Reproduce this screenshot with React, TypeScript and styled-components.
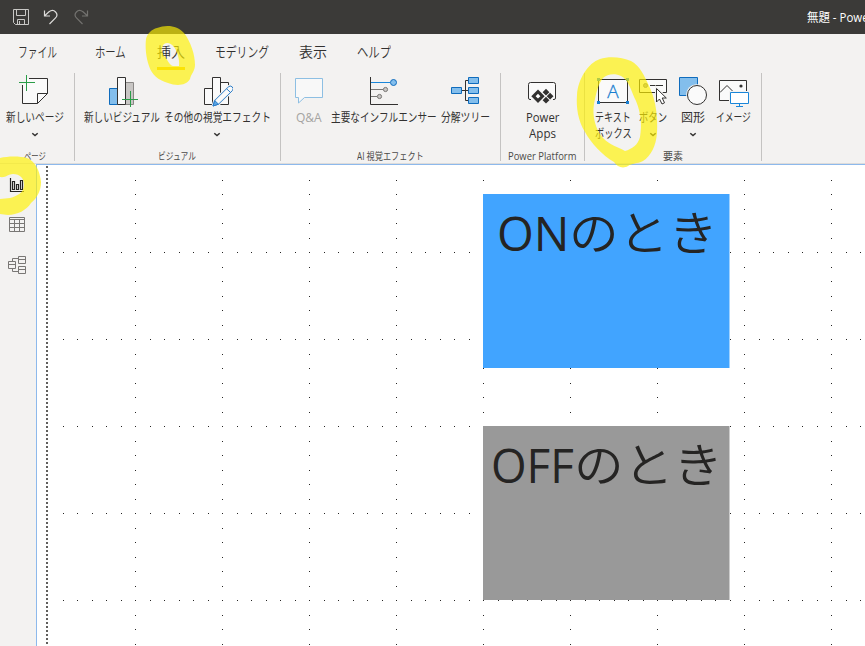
import React, { useLayoutEffect, useRef, useState } from "react";
import styled, { createGlobalStyle } from "styled-components";

const UI = `"Open Sans", "Noto Sans CJK JP", sans-serif`;
const INK = "#323130";
const ACCENT = "#0f6cbd";
const SKY = "#83beec";

const GlobalStyle = createGlobalStyle`
  * { box-sizing: border-box; }
  body { margin: 0; background: #fff; font-family: ${UI}; color: ${INK}; }
`;

const Window = styled.div`
  position: relative;
  display: flex;
  flex-direction: column;
  width: 865px;
  height: 646px;
  overflow: hidden;
`;

const TitleBar = styled.header`
  display: flex;
  align-items: center;
  height: 34px;
  padding-left: 13px;
  gap: 14px;
  background: #3b3a38;
  svg { flex: none; }
`;

const WindowTitle = styled.div`
  margin-left: 704px;
  padding-top: 1px;
  font-size: 12px;
  line-height: 33px;
  color: #fff;
  white-space: nowrap;
`;

const Tabs = styled.nav`
  display: flex;
  height: 39px;
  background: #f3f2f1;
`;

const Tab = styled.div<{ $gap: number }>`
  position: relative;
  height: 36px;
  margin-left: ${(p) => p.$gap}px;
  font-size: 14px;
  font-family: "Noto Sans CJK JP", sans-serif;
  font-weight: 350;
  line-height: 35px;
`;

const ActiveMark = styled.div`
  position: absolute;
  left: 0;
  right: 0;
  bottom: 0;
  height: 3px;
  background: #f2c811;
`;

const Ribbon = styled.section`
  display: flex;
  height: 91px;
  background: #f3f2f1;
  border-bottom: 1px solid #dddcdb;
`;

const Group = styled.div<{ $width: number; $pad?: number }>`
  display: flex;
  flex-direction: column;
  flex: none;
  width: ${(p) => p.$width}px;
  height: 88px;
  padding-left: ${(p) => p.$pad ?? 0}px;
  border-right: 1px solid #c4c3c2;
`;

const Commands = styled.div`
  display: flex;
  flex: none;
  height: 74px;
  padding-top: 2px;
`;

const GroupLabel = styled.div<{ $indent: number }>`
  display: flex;
  padding-left: ${(p) => p.$indent}px;
  font-size: 10px;
  line-height: 18px;
  color: #4b4a48;
`;

const Command = styled.div<{ $width: number; $gap?: number; $disabled?: boolean }>`
  display: flex;
  flex: none;
  flex-direction: column;
  align-items: center;
  width: ${(p) => p.$width}px;
  margin-left: ${(p) => p.$gap ?? 0}px;
  font-size: 12px;
  line-height: 16px;
  color: ${(p) => (p.$disabled ? "#a5a4a2" : INK)};
  svg { flex: none; }
`;

const LabelLines = styled.div`
  display: flex;
  flex-direction: column;
  align-items: center;
  margin-top: 3px;
`;

const FitBox = styled.span`
  display: block;
  white-space: nowrap;
`;

const FitText = styled.span`
  display: inline-block;
  transform-origin: 0 50%;
`;

const Body = styled.main`
  display: flex;
  flex: 1;
  min-height: 0;
`;

const Rail = styled.aside`
  display: flex;
  flex: none;
  flex-direction: column;
  gap: 16px;
  width: 36px;
  padding: 9px 0 0 5px;
  background: #f3f2f1;
  svg { flex: none; }
`;

const Canvas = styled.div`
  position: relative;
  flex: 1;
  overflow: hidden;
  background: #fff;
  border-top: 1px solid #8db9ec;
  border-left: 1px solid #8db9ec;
`;

const GridDots = styled.svg`
  position: absolute;
  left: 0;
  top: 0;
`;

const Tile = styled.div<{ $top: number; $color: string; $indent: number }>`
  position: absolute;
  display: flex;
  left: 446px;
  top: ${(p) => p.$top}px;
  width: 247px;
  height: 174px;
  padding: 5px 0 0 ${(p) => p.$indent}px;
  background: ${(p) => p.$color};
  border-right: 1px solid rgba(255, 255, 255, 0.5);
  font-size: 48px;
  line-height: 68px;
  color: #252423;
`;

const Kana = styled.span`
  display: block;
  font-family: "Noto Sans CJK JP", sans-serif;
  font-size: 47px;
  line-height: 62px;
  font-weight: 350;
`;

const Marker = styled.svg`
  position: absolute;
  left: 0;
  top: 0;
  pointer-events: none;
`;

/* Squeezes a single line of text into a known width. */
function Fit({ w, children }: { w: number; children: React.ReactNode }) {
  const ref = useRef<HTMLSpanElement>(null);
  const [scale, setScale] = useState(1);
  useLayoutEffect(() => {
    const natural = ref.current?.offsetWidth;
    if (natural) setScale(w / natural);
  }, [w]);
  return (
    <FitBox style={{ width: w }}>
      <FitText ref={ref} style={{ transform: `scaleX(${scale})` }}>{children}</FitText>
    </FitBox>
  );
}

function Icon({ x, children }: { x: number; children: React.ReactNode }) {
  return (
    <svg width="32" height="32" viewBox={`${x} 75 32 32`} fill="none" stroke={INK}>
      {children}
    </svg>
  );
}

const Chevron = () => (
  <svg width="8" height="16" viewBox="0 0 8 16" fill="none" stroke={INK} strokeWidth="1.5">
    <path d="M1.3 7.2 4 9.5 6.7 7.2" />
  </svg>
);

type CmdProps = {
  width: number;
  gap?: number;
  disabled?: boolean;
  icon: React.ReactNode;
  lines: [string, number][];
  menu?: boolean;
};

function Cmd({ width, gap, disabled, icon, lines, menu }: CmdProps) {
  return (
    <Command $width={width} $gap={gap} $disabled={disabled}>
      {icon}
      <LabelLines>
        {lines.map(([text, w]) => (
          <Fit key={text} w={w}>{text}</Fit>
        ))}
        {menu && <Chevron />}
      </LabelLines>
    </Command>
  );
}

const NewPageIcon = () => (
  <Icon x={19}>
    <path d="M22.5 84V103.5H37.5L47.5 93.5V78.5H27V84Z" fill="#fafafa" stroke="none" />
    <path d="M29 78.5H47.5V93.5L37.5 103.5H22.5V85" />
    <path d="M37.5 103.5V93.5H47.5" />
    <path d="M26.5 75V91M19 82.5H35" stroke="#2a9d48" />
  </Icon>
);
const NewVisualIcon = () => (
  <Icon x={106}>
    <path d="M109.5 88.5H117.5V104.5H109.5Z" fill={SKY} stroke={ACCENT} />
    <path d="M125.5 82.5H133.5V104.5H125.5Z" fill="#c8c6c4" stroke="#8a8886" />
    <path d="M117.5 77.5H125.5V104.5H117.5Z" fill="#fafafa" />
    <path d="M130.5 91V107M122 99.5H138" stroke="#2a9d48" />
  </Icon>
);
const MoreVisualsIcon = () => (
  <Icon x={201}>
    <path d="M204.5 88.5H212.5V104.5H204.5ZM212.5 77.5H220.5V104.5H212.5ZM220.5 82.5H228.5V104.5H220.5Z" fill="#fafafa" />
    <path d="M213 106 214.7 100.5 228.3 87A2.7 2.7 0 0 1 232.3 90.7L218.5 104.2Z" fill="#fafafa" stroke="#f3f2f1" strokeWidth="3" />
    <path d="M213 106 214.7 100.5 228.3 87A2.7 2.7 0 0 1 232.3 90.7L218.5 104.2Z" fill="#fafafa" stroke="#2b7cc7" />
    <path d="M213 106 214.7 100.5 218.5 104.2Z" fill="#5aa5e4" stroke="#2b7cc7" />
    <path d="M226.5 88.7 230.5 92.4" stroke="#2b7cc7" />
  </Icon>
);
const QnaIcon = () => (
  <Icon x={293}>
    <path d="M295.5 78.5H322.5V97.5H304.5L298.5 103V97.5H295.5Z" fill="#f8f8f8" stroke="#8dbfe3" />
  </Icon>
);
const InfluencerIcon = () => (
  <Icon x={368}>
    <path d="M371 89.5H383M371 96.5H377" stroke="#797775" />
    <path d="M371 82.5H390" stroke="#1a86d9" />
    <path d="M370.5 77V104.5H398" />
    <circle cx="393.5" cy="82.5" r="3" fill={SKY} stroke={ACCENT} />
    <circle cx="385.5" cy="89.5" r="2.1" fill="#c8c6c4" stroke="#797775" />
    <circle cx="379.5" cy="96.5" r="2.1" fill="#c8c6c4" stroke="#797775" />
  </Icon>
);
const TreeIcon = () => (
  <Icon x={449}>
    <path d="M461 90.5H468M468 80.5H465.5V100.5H468" />
    <path d="M451.5 87.5H461.5V93.5H451.5ZM468.5 77.5H478.5V83.5H468.5ZM468.5 87.5H478.5V93.5H468.5ZM468.5 97.5H478.5V103.5H468.5Z" fill={SKY} stroke={ACCENT} />
  </Icon>
);
const PowerAppsIcon = () => (
  <Icon x={526}>
    <path d="M531 99.5H530Q528.5 99.5 528.5 98V84.5Q528.5 82.5 530.5 82.5H553.5Q555.5 82.5 555.5 84.5V98Q555.5 99.5 554 99.5H553" fill="#fafafa" />
    <path d="M538 89.5 544.7 96.2 538 102.9 531.3 96.2ZM546 88.8 549.4 92.2 546 95.6 542.6 92.2ZM550.1 92.8 553.5 96.2 550.1 99.6 546.7 96.2ZM546 96.8 549.4 100.2 546 103.6 542.6 100.2Z" fill={INK} stroke="none" />
    <path d="M538 93.8 540.4 96.2 538 98.6 535.6 96.2Z" fill="#fff" stroke="none" />
  </Icon>
);
const TextBoxIcon = () => (
  <Icon x={597}>
    <path d="M598.5 79.5H627.5V102.5H598.5Z" fill="#fafafa" />
    <path d="M597 78H600V81H597ZM626 78H629V81H626ZM597 101H600V104H597ZM626 101H629V104H626Z" fill="#1a7fd0" stroke="none" />
    <text x="613" y="98" fontSize="19" textAnchor="middle" fontFamily="Open Sans" fontWeight="300" fill="#1a7fd0" stroke="#1a7fd0" strokeWidth="0.3">A</text>
  </Icon>
);
const ButtonIcon = () => (
  <Icon x={637}>
    <path d="M639.5 79.5H666.5V92.5H639.5Z" fill="#fafafa" />
    <circle cx="645.5" cy="85.5" r="2" fill="#a6a5a2" stroke="#797775" />
    <path d="M650 85.5H663" />
    <path d="M656.5 88.5V102L659.5 99 662 104 664.5 102.8 662.2 98H666.3Z" fill="#fff" stroke="#f3f2f1" strokeWidth="3" />
    <path d="M656.5 88.5V102L659.5 99 662 104 664.5 102.8 662.2 98H666.3Z" fill="#fff" />
  </Icon>
);
const ShapesIcon = () => (
  <Icon x={677}>
    <path d="M679.5 77.5H697.5V95.5H679.5Z" fill={SKY} stroke={ACCENT} />
    <circle cx="697" cy="95" r="10.8" fill="#f3f2f1" stroke="none" />
    <circle cx="697" cy="95" r="9.5" fill="#fafafa" />
  </Icon>
);
const ImageIcon = () => (
  <Icon x={717}>
    <path d="M719.5 80.5H746.5V100.5H719.5Z" fill="#fafafa" />
    <path d="M720 92.5 727 85.5 733 91.5" />
    <circle cx="741" cy="86" r="1.6" fill={INK} stroke="none" />
    <path d="M730.5 92.5H748.5V103.5H730.5Z" fill="#fff" stroke="#f3f2f1" strokeWidth="3" />
    <path d="M730.5 92.5H748.5V103.5H730.5ZM739.5 104V106.5M736 106.5H743" fill="#fff" stroke="#1a86d9" />
  </Icon>
);

const HIGHLIGHT = "rgba(255, 241, 0, 0.66)";

export default function App() {
  return (
    <Window>
      <GlobalStyle />
      <TitleBar>
        <svg width="16" height="16" viewBox="0 0 16 16" fill="none" stroke="#c9c8c6">
          <path d="M.5 .5H15.5V15.5H2.5L.5 13.5ZM3.5 .5V6.5H12.5V.5M4.5 15.5V10.5H11.5V15.5M6.5 12V15" />
        </svg>
        <svg width="16" height="16" viewBox="0 0 16 16" fill="none" stroke="#dddcda" strokeWidth="1.2">
          <path d="M1.5 1.5V7H7M1.7 6.8 6 2.8C8.5 .8 11 1.2 12.6 3 14.5 5 14.1 7.4 12.3 9.2L6.5 15" />
        </svg>
        <svg width="16" height="16" viewBox="0 0 16 16" fill="none" stroke="#73726f" strokeWidth="1.2">
          <path d="M14.5 1.5V7H9M14.3 6.8 10 2.8C7.5 .8 5 1.2 3.4 3 1.5 5 1.9 7.4 3.7 9.2L9.5 15" />
        </svg>
        <WindowTitle><Fit w={62}>無題 - Powe</Fit></WindowTitle>
      </TitleBar>

      <Tabs>
        <Tab $gap={18}><Fit w={39}>ファイル</Fit></Tab>
        <Tab $gap={38}><Fit w={31}>ホーム</Fit></Tab>
        <Tab $gap={31}><Fit w={28}>挿入</Fit><ActiveMark /></Tab>
        <Tab $gap={30}><Fit w={54}>モデリング</Fit></Tab>
        <Tab $gap={30}><Fit w={28}>表示</Fit></Tab>
        <Tab $gap={30}><Fit w={34}>ヘルプ</Fit></Tab>
      </Tabs>

      <Ribbon>
        <Group $width={75}>
          <Commands>
            <Cmd width={70} icon={<NewPageIcon />} lines={[["新しいページ", 58]]} menu />
          </Commands>
          <GroupLabel $indent={24}><Fit w={22}>ページ</Fit></GroupLabel>
        </Group>
        <Group $width={206} $pad={6}>
          <Commands>
            <Cmd width={82} icon={<NewVisualIcon />} lines={[["新しいビジュアル", 76]]} />
            <Cmd width={108} icon={<MoreVisualsIcon />} lines={[["その他の視覚エフェクト", 107]]} menu />
          </Commands>
          <GroupLabel $indent={77}><Fit w={38}>ビジュアル</Fit></GroupLabel>
        </Group>
        <Group $width={220} $pad={7}>
          <Commands>
            <Cmd width={42} disabled icon={<QnaIcon />} lines={[["Q&A", 26]]} />
            <Cmd width={106} gap={1} icon={<InfluencerIcon />} lines={[["主要なインフルエンサー", 106]]} />
            <Cmd width={50} gap={3} icon={<TreeIcon />} lines={[["分解ツリー", 49]]} />
          </Commands>
          <GroupLabel $indent={69}><Fit w={67}>AI 視覚エフェクト</Fit></GroupLabel>
        </Group>
        <Group $width={84}>
          <Commands>
            <Cmd width={82} icon={<PowerAppsIcon />} lines={[["Power", 33], ["Apps", 27]]} />
          </Commands>
          <GroupLabel $indent={7}><Fit w={68}>Power Platform</Fit></GroupLabel>
        </Group>
        <Group $width={177} $pad={8}>
          <Commands>
            <Cmd width={40} icon={<TextBoxIcon />} lines={[["テキスト", 36], ["ボックス", 37]]} />
            <Cmd width={40} icon={<ButtonIcon />} lines={[["ボタン", 28]]} menu />
            <Cmd width={40} icon={<ShapesIcon />} lines={[["図形", 24]]} menu />
            <Cmd width={40} icon={<ImageIcon />} lines={[["イメージ", 35]]} />
          </Commands>
          <GroupLabel $indent={70}><Fit w={20}>要素</Fit></GroupLabel>
        </Group>
      </Ribbon>

      <Body>
        <Rail>
          <svg width="24" height="24" viewBox="5 173 24 24" fill="none" stroke="#252423">
            <path d="M10.5 178V191.5H24M12.5 181.5H14.5V189.5H12.5ZM16.5 184.5H18.5V189.5H16.5ZM20.5 180.5H22.5V189.5H20.5Z" strokeWidth="1.2" />
          </svg>
          <svg width="24" height="24" viewBox="5 213 24 24" fill="none" stroke="#797775">
            <path d="M9.5 217.5H24.5V231.5H9.5ZM9.5 219.5H24.5M9.5 223.5H24.5M9.5 227.5H24.5M14.5 219.5V231.5M19.5 219.5V231.5" />
          </svg>
          <svg width="24" height="24" viewBox="5 253 24 24" fill="none" stroke="#797775">
            <path d="M8.5 261.5H15.5V268.5H8.5ZM8.5 264.5H15.5M18.5 256.5H25.5V263.5H18.5ZM18.5 259.5H25.5M18.5 266.5H25.5V273.5H18.5ZM18.5 269.5H25.5M12.5 261V258.5H18M12.5 269V271.5H18" />
          </svg>
        </Rail>
        <Canvas>
          <GridDots width="828" height="481" viewBox="37 165 828 481" shapeRendering="crispEdges">
            <defs>
              <pattern id="cols" x="135" y="180" width="87" height="29" patternUnits="userSpaceOnUse">
                <path d="M0 0H1V1H0ZM0 14H1V15H0Z" fill="#252423" />
              </pattern>
              <pattern id="rows" x="63" y="252" width="29" height="87" patternUnits="userSpaceOnUse">
                <path d="M0 0H1V1H0ZM14 0H15V1H14Z" fill="#252423" />
              </pattern>
              <pattern id="edge" x="46" y="166" width="2" height="4" patternUnits="userSpaceOnUse">
                <path d="M0 0H2V2H0Z" fill="#605e5c" />
              </pattern>
            </defs>
            <rect x="100" y="178" width="765" height="468" fill="url(#cols)" />
            <rect x="60" y="240" width="805" height="406" fill="url(#rows)" />
            <rect x="46" y="166" width="2" height="480" fill="url(#edge)" />
          </GridDots>
          <Tile $top={29} $color="#41a4ff" $indent={14}>
            <Fit w={72}>ON</Fit>
            <Kana><Fit w={149}>のとき</Fit></Kana>
          </Tile>
          <Tile $top={261} $color="#999999" $indent={8}>
            <Fit w={83}>OFF</Fit>
            <Kana><Fit w={149}>のとき</Fit></Kana>
          </Tile>
        </Canvas>
      </Body>

      <Marker width="865" height="646" viewBox="0 0 865 646" fill={HIGHLIGHT} fillRule="evenodd">
        <path d="M157 28C167 24 178 26 184 33C191 42 195 55 195 65C195 71 191 74 190 79C186 86 176 86 168 83C158 80 152 75 149 66C146 58 145 47 146 39C147 34 152 29 157 28ZM164 44C161 47 161 53 165 57C168 60 169 65 173 66L179 66C180 60 177 51 174 47C171 43 167 42 164 44Z" />
        <path d="M600 59C609 56 622 57 631 61C640 66 644 75 650 88C656 101 658 118 657 133C656 146 651 156 643 161C637 164 632 163 628 166C623 169 617 167 614 162C602 155 591 143 585 132C578 121 576 107 577 95C578 79 588 63 600 59ZM603 78C598 84 596 94 594 104C592 115 595 129 603 138C610 145 618 147 625 151C632 149 638 145 640 137C642 125 641 113 636 101C631 91 629 80 621 76C615 73 607 74 603 78Z" />
        <path d="M0 158C8 156 20 156 27 158C35 161 40 171 41 182C41 191 37 198 31 203C27 210 17 215 8 215L0 214V199L10 198C18 196 24 192 24 185C24 178 20 174 13 174C8 174 6 178 0 177Z" />
      </Marker>
    </Window>
  );
}
